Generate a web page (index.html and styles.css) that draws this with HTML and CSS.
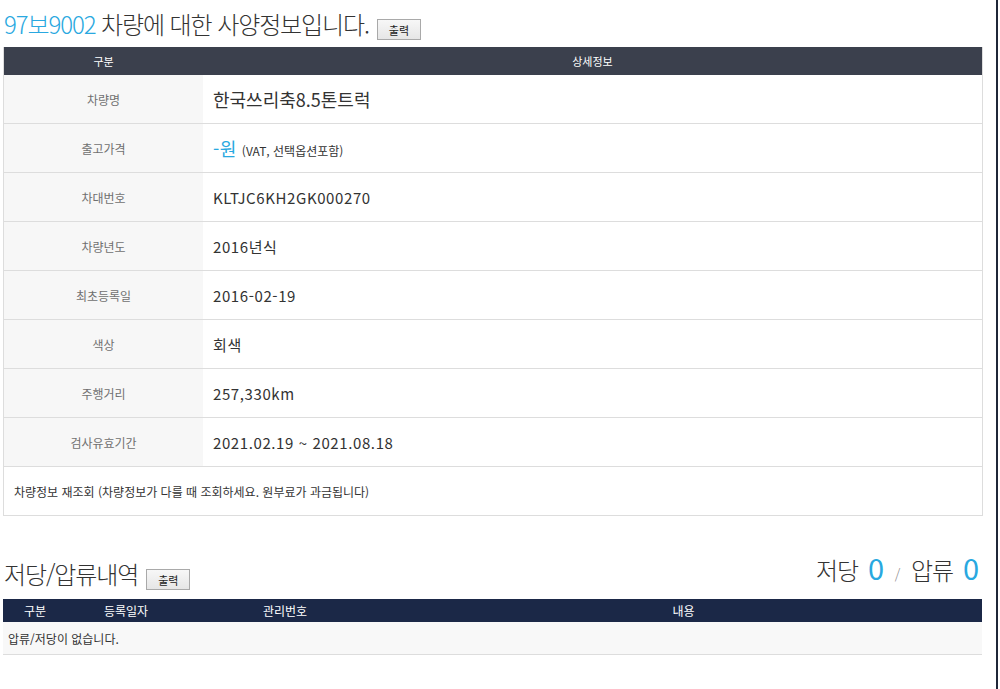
FILE: index.html
```html
<!DOCTYPE html>
<html lang="ko">
  <head>
    <meta charset="UTF-8" />
    <title>차량 사양정보</title>
    <link rel="stylesheet" href="styles.css">
  </head>
  <body>
    <div class="page">
      <div class="section-head">
        <h2 class="title"><span class="plate">97보9002</span> 차량에 대한 사양정보입니다.</h2>
        <button class="print-btn" type="button">출력</button>
      </div>

      <table class="spec-table">
        <thead>
          <tr>
            <th class="col-label">구분</th>
            <th>상세정보</th>
          </tr>
        </thead>
        <tbody>
          <tr>
            <td class="label">차량명</td>
            <td class="value value-name">한국쓰리축8.5톤트럭</td>
          </tr>
          <tr>
            <td class="label">출고가격</td>
            <td class="value"><span class="price">-원</span> <span class="note">(VAT, 선택옵션포함)</span></td>
          </tr>
          <tr>
            <td class="label">차대번호</td>
            <td class="value">KLTJC6KH2GK000270</td>
          </tr>
          <tr>
            <td class="label">차량년도</td>
            <td class="value">2016년식</td>
          </tr>
          <tr>
            <td class="label">최초등록일</td>
            <td class="value">2016-02-19</td>
          </tr>
          <tr>
            <td class="label">색상</td>
            <td class="value">회색</td>
          </tr>
          <tr>
            <td class="label">주행거리</td>
            <td class="value">257,330km</td>
          </tr>
          <tr>
            <td class="label">검사유효기간</td>
            <td class="value">2021.02.19 ~ 2021.08.18</td>
          </tr>
          <tr>
            <td class="requery" colspan="2">차량정보 재조회 (차량정보가 다를 때 조회하세요. 원부료가 과금됩니다)</td>
          </tr>
        </tbody>
      </table>

      <div class="section-head lien-head">
        <h2 class="title">저당/압류내역</h2>
        <button class="print-btn" type="button">출력</button>
        <div class="counts">
          저당 <span class="num">0</span> <span class="slash">/</span> 압류 <span class="num">0</span>
        </div>
      </div>

      <table class="lien-table">
        <thead>
          <tr>
            <th class="c1">구분</th>
            <th class="c2">등록일자</th>
            <th class="c3">관리번호</th>
            <th>내용</th>
          </tr>
        </thead>
        <tbody>
          <tr>
            <td colspan="4">압류/저당이 없습니다.</td>
          </tr>
        </tbody>
      </table>
    </div>
  </body>
</html>
```

FILE: styles.css
```css
html,
body {
  margin: 0;
  padding: 0;
  background: #fff;
}

body {
  font-family: "Noto Sans CJK KR", "Noto Sans", sans-serif;
  color: #333;
}

.page {
  width: 996px;
  min-height: 689px;
  border-right: 2px solid #1f2638;
  box-sizing: content-box;
}

.section-head {
  display: flex;
  align-items: flex-end;
  height: 47px;
  padding-left: 4px;
  width: 974px;
}

.title {
  margin: 0 0 8px;
  font-size: 24px;
  font-weight: 300;
  letter-spacing: -1.1px;
  line-height: 30px;
  color: #333;
}

.plate {
  color: #29a8e0;
}

.print-btn {
  margin: 0 0 7px 8px;
  width: 44px;
  height: 21px;
  padding: 0;
  font-family: "Noto Sans CJK KR", sans-serif;
  font-size: 11px;
  color: #222;
  background: linear-gradient(#f7f7f7, #e6e6e6);
  border: 1px solid #a9a9a9;
  border-radius: 0;
}

table {
  border-collapse: collapse;
  table-layout: fixed;
}

.spec-table {
  margin-left: 3px;
  width: 980px;
  border-left: 1px solid #ddd;
  border-right: 1px solid #ddd;
}

.spec-table th {
  height: 28px;
  padding: 0;
  background: #3b404d;
  color: #fff;
  font-size: 11px;
  font-weight: 400;
}

.spec-table .col-label {
  width: 199px;
}

.spec-table td {
  height: 48px;
  padding: 0;
  border-bottom: 1px solid #ddd;
}

.spec-table .label {
  background: #f7f7f7;
  text-align: center;
  font-size: 12px;
  color: #707070;
}

.spec-table .value {
  padding-left: 10px;
  font-size: 15px;
  letter-spacing: 0.6px;
  color: #333;
}

.spec-table .value-name {
  font-size: 18px;
  letter-spacing: 0;
}

.price {
  color: #29a8e0;
  font-size: 18px;
}

.note {
  font-size: 12px;
  letter-spacing: 0;
}

.spec-table .requery {
  padding-left: 10px;
  font-size: 12px;
  color: #333;
}

.lien-head {
  margin-top: 32px;
  height: 51px;
}

.lien-head .title {
  margin-bottom: 10px;
}

.lien-head .print-btn {
  margin-bottom: 9px;
}

.counts {
  margin: 0 0 10px auto;
  font-size: 24px;
  font-weight: 300;
  letter-spacing: -1px;
  line-height: 30px;
  color: #333;
}

.counts .num {
  color: #29a8e0;
  font-size: 29px;
  font-weight: 400;
  margin-left: 4px;
}

.counts .slash {
  font-size: 14px;
  color: #888;
  margin: 0 6px;
}

.lien-table {
  margin-left: 3px;
  width: 979px;
}

.lien-table th {
  height: 23px;
  padding: 0;
  background: #1b2847;
  color: #fff;
  font-size: 12px;
  font-weight: 400;
}

.lien-table .c1 {
  width: 64px;
}

.lien-table .c2 {
  width: 118px;
}

.lien-table .c3 {
  width: 200px;
}

.lien-table td {
  height: 32px;
  padding: 0 0 0 5px;
  background: #f8f8f8;
  border-bottom: 1px solid #ddd;
  font-size: 12px;
  color: #333;
}
```
